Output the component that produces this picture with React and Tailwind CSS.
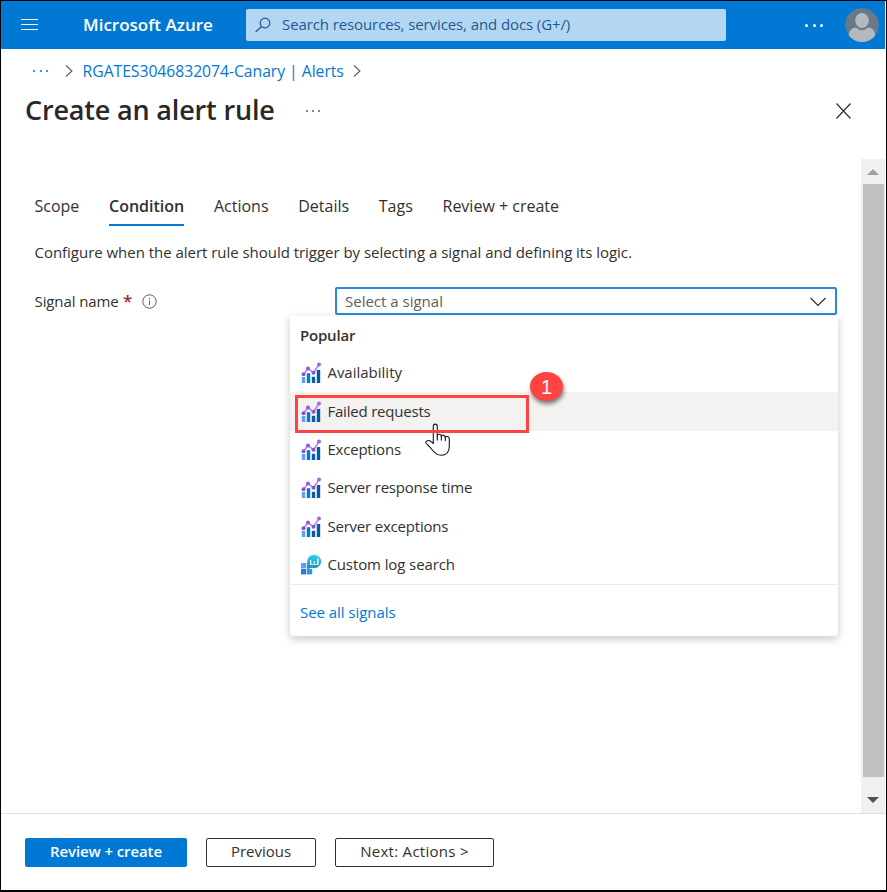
function MetricIcon() {
  return (
    <svg width="20" height="22" viewBox="0 0 20 22" className="shrink-0">
      <rect x="0.8" y="15" width="3.4" height="6" fill="#5ea0ef" />
      <rect x="5.8" y="11.2" width="3.4" height="9.8" fill="#0078d4" />
      <rect x="10.8" y="14.8" width="3.4" height="6.2" fill="#0a5ba8" />
      <rect x="15.8" y="8" width="3.4" height="13" fill="#005ba1" />
      <path d="M2.5 12.2 L7 6.5 L12.5 10.8 L18 2.5" fill="none" stroke="#b77af4" strokeWidth="1.5" />
      <circle cx="2.5" cy="12.2" r="2" fill="#8a50d8" />
      <circle cx="7" cy="6.5" r="2" fill="#9355e8" />
      <circle cx="12.5" cy="10.8" r="2" fill="#8a50d8" />
      <circle cx="18" cy="2.5" r="2" fill="#a067ee" />
    </svg>
  );
}

function LogIcon() {
  return (
    <svg width="20" height="22" viewBox="0 0 20 22" className="shrink-0 overflow-visible">
      <defs>
        <linearGradient id="bubble" x1="0" y1="0" x2="0" y2="1">
          <stop offset="0" stopColor="#32d4f5" />
          <stop offset="1" stopColor="#198ab3" />
        </linearGradient>
      </defs>
      <path d="M0 9h5.3v5.4H0z" fill="#5ea0ef" />
      <path d="M0 15h5.3v5.4H0z" fill="#1c7fd8" />
      <path d="M6 15h5.2v5.4H6z" fill="#2f93e6" />
      <path d="M6 9h3v5.4H6z" fill="#3a9be8" />
      <path d="M13.3 0.8a7 6.7 0 1 1-2.5 13L5.8 15l1.3-4.2A7 6.7 0 0 1 13.3 0.8z" fill="url(#bubble)" />
      <path d="M9 6h1.3v4.5H9zM12.6 7.5h1.4v2h-1.4zM16.2 4.5h1.4v6H16.200z" fill="#fff" />
      <path d="M9 10h8.600v0.900H9z" fill="#d8f2fa" />
    </svg>
  );
}

function Chevron() {
  return (
    <svg width="8" height="12" viewBox="0 0 8 12" fill="none" stroke="#605e5c" strokeWidth="1.1" className="shrink-0">
      <path d="M1 0.5 L7 6 L1 11.5" />
    </svg>
  );
}

function Dots({ className }) {
  return (
    <div className={`flex shrink-0 items-center ${className}`}>
      <i /><i /><i />
    </div>
  );
}

function HandCursor() {
  return (
    <svg width="26" height="34" viewBox="0 0 26 34" className="absolute left-[135px] top-[107px]">
      <path
        d="M8.3 20.5 V3.500 C8.300 0.300 12.300 0.300 12.300 3.500 V13 C12.800 10.500 16.300 10.900 16.300 13.300 C17 11.700 20.300 12 20.300 14.300 C21.300 12.800 24.300 13.300 24.300 16 V23 C24.300 29 21 32.300 16 32.300 C11.500 32.300 9 29.500 6.500 26 C4.500 23.300 2.500 22 1 20 C0.300 18.500 2 17.200 4 17.500 C6 18 7 19.300 8.300 20.500 Z"
        fill="#fff" stroke="#14142b" strokeWidth="1.1" strokeLinejoin="round"
      />
      <path d="M12.3 12.5 V17.5 M16.3 13 V17.5 M20.3 14 V18" stroke="#14142b" strokeWidth="1.1" />
    </svg>
  );
}

const tabs = ["Scope", "Condition", "Actions", "Details", "Tags", "Review + create"];
const signals = ["Availability", "Failed requests", "Exceptions", "Server response time", "Server exceptions", "Custom log search"];

function SignalMenu() {
  return (
    <div className="absolute left-[-45px] top-[29px] h-[320px] w-[548px] rounded-b-sm bg-white shadow-[0_3px_10px_rgba(0,0,0,0.22)]">
      <div className="flex h-[38px] items-center pl-2.5 font-semibold tracking-[-0.2px]">Popular</div>
      {signals.map((s) => (
        <div
          key={s}
          className={`flex h-[38.4px] items-center gap-[6.4px] pl-[11px] ${s === "Custom log search" ? "tracking-[-0.1px]" : s === "Availability" ? "" : "tracking-[-0.2px]"} ${s === "Failed requests" ? "bg-[#f3f2f1]" : ""}`}
        >
          {s === "Custom log search" ? <LogIcon /> : <MetricIcon />}
          <span className="pb-0.5">{s}</span>
        </div>
      ))}
      <div className="flex h-[51px] items-center border-t border-[#edebe9] pl-2.5 pt-1 tracking-[-0.05px] text-[#0078d4]">See all signals</div>
      <HandCursor />
      <div className="absolute left-[5px] top-[79px] h-[38px] w-[234px] border-[3px] border-[#ff4343]" />
      <div className="absolute left-[240px] top-[56px] flex h-[29px] w-[33px] items-center justify-center rounded-[50%] bg-[#ff4343] font-['Liberation_Sans',sans-serif] text-[20px] text-white shadow-[1px_3px_4px_rgba(0,0,0,0.5)]">
        1
      </div>
    </div>
  );
}

export default function App() {
  return (
    <div className="flex h-[892px] w-[887px] flex-col overflow-hidden border border-b-2 border-black bg-white font-['Open_Sans',sans-serif] text-[15px] leading-5 whitespace-nowrap text-[#323130]">
      <header className="mr-px flex h-12 shrink-0 items-center bg-[#0078d4] pl-5 text-white">
        <svg width="17" height="12" viewBox="0 0 17 12" stroke="#fff" strokeWidth="1">
          <path d="M0 0.5h17M0 5.5h17M0 10.5h17" />
        </svg>
        <div className="ml-[45px] w-[163px] text-[17px] font-semibold">Microsoft Azure</div>
        <div className="flex h-8 w-[480px] items-center rounded-[2px] bg-[#b3d6f2] pl-[9px] tracking-[-0.1px] text-[#1e5a93]">
          <svg width="16" height="16" viewBox="0 0 16 16" fill="none" stroke="#1e5a93" strokeWidth="1.2">
            <circle cx="10" cy="6" r="4.8" />
            <path d="M6.5 9.5 L0.6 15" />
          </svg>
          <span className="ml-[11px] pb-0.5">Search resources, services, and docs (G+/)</span>
        </div>
        <Dots className="ml-[79px] gap-[4.5px] [&>i]:size-[3px] [&>i]:rounded-full [&>i]:bg-white" />
        <svg width="34" height="34" viewBox="0 0 34 34" className="ml-[22px] shrink-0">
          <clipPath id="face"><circle cx="17" cy="17" r="17" /></clipPath>
          <g clipPath="url(#face)">
            <circle cx="17" cy="17" r="17" fill="#69798a" />
            <rect x="4" y="19.5" width="26" height="18" rx="7" fill="#b4b9bf" />
            <ellipse cx="17" cy="13" rx="8.2" ry="9.2" fill="#69798a" />
            <ellipse cx="17" cy="12.5" rx="6.8" ry="7.5" fill="#b4b9bf" />
          </g>
        </svg>
      </header>

      <nav className="flex h-11 shrink-0 items-center pl-8 text-[15.7px] text-[#0078d4]">
        <Dots className="gap-[4.5px] [&>i]:size-[2px] [&>i]:rounded-full [&>i]:bg-[#0078d4]" />
        <div className="ml-[17px]"><Chevron /></div>
        <span className="ml-[9.6px] w-[270.4px] tracking-[-0.02px]">RGATES3046832074-Canary | Alerts</span>
        <Chevron />
      </nav>

      <div className="flex h-[66px] shrink-0 items-start pl-6">
        <h1 className="w-[281px] text-[27px] leading-[34px] font-semibold tracking-[-0.17px] text-[#292827]">Create an alert rule</h1>
        <Dots className="mt-[17px] gap-1 [&>i]:size-[2px] [&>i]:rounded-full [&>i]:bg-[#605e5c]" />
        <svg width="15" height="16" viewBox="0 0 15 16" stroke="#323130" strokeWidth="1.2" className="ml-[516px] mt-2.5">
          <path d="M0.5 0.5 L14.5 15.5 M14.5 0.5 L0.5 15.5" />
        </svg>
      </div>

      <main className="flex h-[654px] shrink-0 pr-px">
        <div className="w-[860px] pl-[33.5px]">
          <div className="flex h-[67px] items-end gap-[29.7px] text-base leading-5">
            {tabs.map((t) => (
              <div key={t} className={`h-[30px] border-b-2 ${t === "Condition" ? "border-[#0078d4] font-semibold" : "border-transparent"}`}>
                {t}
              </div>
            ))}
          </div>
          <p className="mt-4 tracking-[-0.03px]">Configure when the alert rule should trigger by selecting a signal and defining its logic.</p>
          <div className="mt-[25px] flex h-7 items-center">
            <span className="w-[88.5px] tracking-[-0.1px]">Signal name</span>
            <span className="w-[19px] text-[17px] font-semibold text-[#a4262c]">*</span>
            <svg width="15" height="15" viewBox="0 0 15 15" fill="none" stroke="#605e5c">
              <circle cx="7.5" cy="7.5" r="6.7" />
              <path d="M7.5 6.5v4.5M7.5 4v1.3" />
            </svg>
            <div className="relative ml-[178px] h-7 w-[502px]">
              <div className="flex h-7 items-center justify-between rounded-[2px] border-2 border-[#2b88d8] pr-[9px] pl-[8px] text-[#605e5c]">
                Select a signal
                <svg width="16" height="10" viewBox="0 0 16 10" fill="none" stroke="#323130" strokeWidth="1.2" className="mt-0.5">
                  <path d="M0.5 1 L8 8.5 L15.5 1" />
                </svg>
              </div>
              <SignalMenu />
            </div>
          </div>
        </div>
        <div className="flex w-6 shrink-0 flex-col items-center bg-[#f0f0f0]">
          <div className="flex h-[25px] shrink-0 items-center pt-px">
            <svg width="12" height="6"><path d="M0 6 L6 0 L12 6z" fill="#a0a0a0" /></svg>
          </div>
          <div className="ml-px h-[593px] w-[21px] shrink-0 bg-[#c1c1c1]" />
          <div className="pt-5">
            <svg width="12" height="6"><path d="M0 0 L6 6 L12 0z" fill="#505050" /></svg>
          </div>
        </div>
      </main>

      <footer className="flex h-[77px] shrink-0 items-center border-t border-[#e1dfdd] pl-6 text-[15px]">
        <button className="h-[29px] w-[162px] rounded-[2px] bg-[#0078d4] pb-0.5 font-semibold tracking-[-0.1px] text-white">Review + create</button>
        <button className="ml-[19px] h-[29px] w-[110px] rounded-[2px] border border-[#323130] pb-0.5">Previous</button>
        <button className="ml-[19px] h-[29px] w-[159px] rounded-[2px] border border-[#323130] pb-0.5 tracking-[0.28px]">{"Next: Actions >"}</button>
      </footer>
    </div>
  );
}
